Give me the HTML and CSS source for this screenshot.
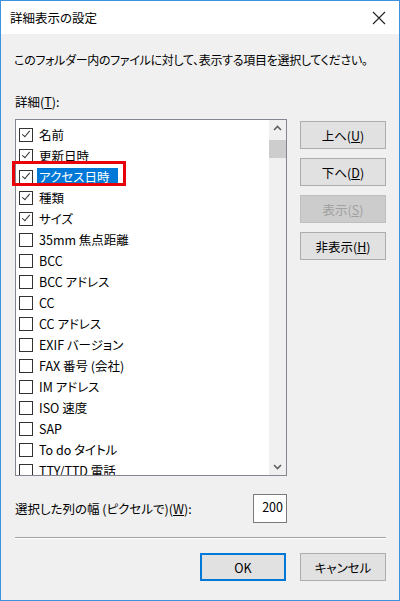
FILE: index.html
```html
<!DOCTYPE html>
<html lang="ja">
<head>
<meta charset="UTF-8" />
<title>詳細表示の設定</title>
<link rel="stylesheet" href="styles.css">
</head>
<body>

<div class="dialog">
  <div class="titlebar">
    <span class="title">詳細表示の設定</span>
    <svg class="close" width="14" height="14" viewBox="0 0 14 14">
      <path d="M1 1 L13 13 M13 1 L1 13" stroke="#222" stroke-width="1.1" fill="none" />
    </svg>
  </div>

  <div class="content">
    <p class="intro">このフォルダー内のファイルに対して、表示する項目を選択してください。</p>
    <div class="caption">詳細(<u>T</u>):</div>

    <div class="main">
      <div class="listbox">
        <ul class="items">
          <li><span class="box checked"></span><span class="label">名前</span></li>
          <li><span class="box checked"></span><span class="label">更新日時</span></li>
          <li class="selected"><span class="box checked"></span><span class="label">アクセス日時</span></li>
          <li><span class="box checked"></span><span class="label">種類</span></li>
          <li><span class="box checked"></span><span class="label">サイズ</span></li>
          <li><span class="box"></span><span class="label">35mm 焦点距離</span></li>
          <li><span class="box"></span><span class="label">BCC</span></li>
          <li><span class="box"></span><span class="label">BCC アドレス</span></li>
          <li><span class="box"></span><span class="label">CC</span></li>
          <li><span class="box"></span><span class="label">CC アドレス</span></li>
          <li><span class="box"></span><span class="label">EXIF バージョン</span></li>
          <li><span class="box"></span><span class="label">FAX 番号 (会社)</span></li>
          <li><span class="box"></span><span class="label">IM アドレス</span></li>
          <li><span class="box"></span><span class="label">ISO 速度</span></li>
          <li><span class="box"></span><span class="label">SAP</span></li>
          <li><span class="box"></span><span class="label">To do タイトル</span></li>
          <li><span class="box"></span><span class="label">TTY/TTD 電話</span></li>
        </ul>
        <div class="scrollbar">
          <svg class="arrow" width="17" height="17" viewBox="0 0 17 17">
            <path d="M5 10 L8.5 6.5 L12 10" stroke="#606060" stroke-width="1.6" fill="none" />
          </svg>
          <div class="thumb"></div>
          <div class="track"></div>
          <svg class="arrow" width="17" height="17" viewBox="0 0 17 17">
            <path d="M5 7 L8.5 10.5 L12 7" stroke="#606060" stroke-width="1.6" fill="none" />
          </svg>
        </div>
      </div>

      <div class="side">
        <button class="btn">上へ(<u>U</u>)</button>
        <button class="btn">下へ(<u>D</u>)</button>
        <button class="btn" disabled>表示(<u>S</u>)</button>
        <button class="btn">非表示(<u>H</u>)</button>
      </div>

      <div class="mark"></div>
    </div>

    <div class="width-row">
      <span>選択した列の幅 (ピクセルで)(<u>W</u>):</span>
      <input class="width-input" type="text" value="200" />
    </div>

    <div class="separator"></div>

    <div class="footer">
      <button class="btn default">OK</button>
      <button class="btn">キャンセル</button>
    </div>
  </div>
</div>

</body>
</html>
```

FILE: styles.css
```css
html, body {
  margin: 0;
  padding: 0;
}
body {
  font-family: "Noto Sans CJK JP", "Noto Sans", sans-serif;
  font-size: 12px;
  font-feature-settings: "palt";
  color: #000;
  background: #fff;
}
.dialog {
  width: 400px;
  height: 601px;
  box-sizing: border-box;
  border: 1px solid #3d93e0;
  display: flex;
  flex-direction: column;
  background: #f0f0f0;
}
.titlebar {
  height: 33px;
  background: #fff;
  display: flex;
  align-items: center;
  justify-content: space-between;
  padding: 0 13px 0 9px;
  flex: none;
}
.title {
  font-size: 12.5px;
  line-height: 16px;
}
.close {
  display: block;
}
.content {
  flex: 1;
  padding: 0 13px;
  display: flex;
  flex-direction: column;
}
.intro {
  margin: 18px 0 0;
  line-height: 16px;
  font-size: 12px;
  letter-spacing: -0.3px;
  white-space: nowrap;
}
.caption {
  margin: 26px 0 0 1px;
  line-height: 16px;
  font-size: 12.5px;
}
.main {
  display: flex;
  gap: 13px;
  margin-top: 9px;
  position: relative;
}
.listbox {
  width: 272px;
  height: 357px;
  box-sizing: border-box;
  border: 1px solid #828790;
  background: #fff;
  display: flex;
  margin-left: 1px;
}
.items {
  list-style: none;
  margin: 0;
  padding: 4px 0 0 3px;
  flex: 1;
  overflow: hidden;
}
.items li {
  height: 21px;
  display: flex;
  align-items: center;
  white-space: nowrap;
}
.box {
  width: 12px;
  height: 12px;
  border: 1px solid #333;
  background: #fff;
  margin-right: 4px;
  position: relative;
  flex: none;
}
.box.checked::after {
  content: "";
  position: absolute;
  left: 3.5px;
  top: 0.5px;
  width: 3px;
  height: 7px;
  border: solid #333;
  border-width: 0 1.3px 1.3px 0;
  transform: rotate(40deg);
}
.label {
  font-size: 12.5px;
  line-height: 17px;
  padding: 0 2px;
}
.selected .label {
  background: #0078d7;
  color: #fff;
  padding: 0 9px 0 2px;
}
.mark {
  position: absolute;
  left: -2px;
  top: 42px;
  width: 108px;
  height: 19px;
  border: 3px solid #e8000b;
  pointer-events: none;
}
.scrollbar {
  width: 17px;
  background: #f0f0f0;
  display: flex;
  flex-direction: column;
  flex: none;
}
.arrow {
  display: block;
  flex: none;
}
.thumb {
  height: 18px;
  margin: 3px 0 0;
  background: #cdcdcd;
  flex: none;
}
.track {
  flex: 1;
}
.side {
  display: flex;
  flex-direction: column;
  gap: 9px;
  padding-top: 2px;
}
.btn {
  width: 86px;
  height: 28px;
  box-sizing: border-box;
  border: 1px solid #adadad;
  background: #e1e1e1;
  font-family: inherit;
  font-size: 12.5px;
  font-feature-settings: "palt";
  color: #000;
  padding: 0;
}
.btn[disabled] {
  background: #cccccc;
  border-color: #bfbfbf;
  color: #a0a0a0;
}
.btn.default {
  border: 1px solid #0078d7;
  box-shadow: inset 0 0 0 1px #0078d7;
}
.width-row {
  display: flex;
  align-items: center;
  justify-content: space-between;
  margin-top: 18px;
  padding-left: 1px;
  padding-right: 99px;
}
.width-row span {
  font-size: 12.5px;
}
.width-input {
  width: 34px;
  height: 29px;
  box-sizing: border-box;
  border: 1px solid #7a7a7a;
  text-align: right;
  font-family: inherit;
  font-size: 12.5px;
  padding: 0 3px 4px 0;
  background: #fff;
}
.separator {
  height: 1px;
  background: #a0a0a0;
  border-bottom: 1px solid #fff;
  margin: 14px 0 0 1px;
}
.footer {
  display: flex;
  justify-content: flex-end;
  gap: 14px;
  margin-top: 14px;
}
```
